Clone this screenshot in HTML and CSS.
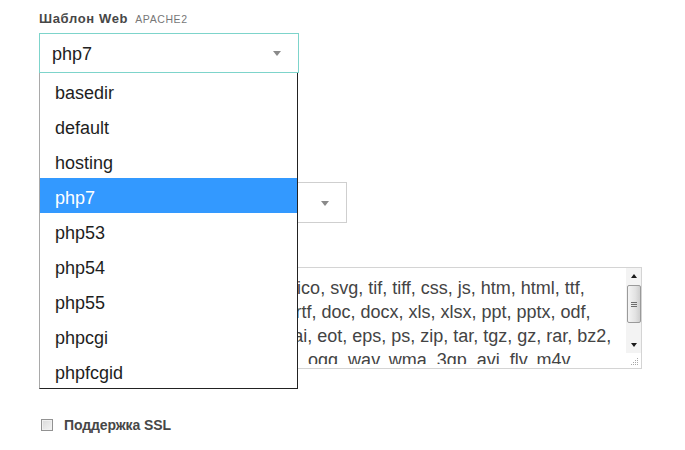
FILE: index.html
```html
<!DOCTYPE html>
<html lang="ru">
<head>
<meta charset="utf-8">
<title>Шаблон Web</title>
<link rel="stylesheet" href="styles.css">
</head>
<body>
<form class="form">
  <div class="label-row">
    <span class="label">Шаблон Web</span>
    <span class="hint">APACHE2</span>
  </div>
  <div class="select-wrap">
    <div class="select select-active">
      <span class="select-value">php7</span>
      <span class="arrow"></span>
    </div>
    <ul class="dropdown">
      <li class="option">basedir</li>
      <li class="option">default</li>
      <li class="option">hosting</li>
      <li class="option option-selected">php7</li>
      <li class="option">php53</li>
      <li class="option">php54</li>
      <li class="option">php55</li>
      <li class="option">phpcgi</li>
      <li class="option">phpfcgid</li>
    </ul>
  </div>

  <div class="select select-second">
    <span class="select-value"></span>
    <span class="arrow"></span>
  </div>

  <div class="textarea">
    <div class="textarea-text">jpg, jpeg, gif, png, bmp, ico, svg, tif, tiff, css, js, htm, html, ttf,<br>otf, webp, woff, txt, csv, rtf, doc, docx, xls, xlsx, ppt, pptx, odf,<br>odp, ods, odt, pdf, psd, ai, eot, eps, ps, zip, tar, tgz, gz, rar, bz2,<br>7z, aac, m4a, mp3, mp4, ogg, wav, wma, 3gp, avi, flv, m4v,</div>
    <div class="scrollbar">
      <div class="sb-btn"><span class="sb-up"></span></div>
      <div class="sb-thumb"><span class="grip"></span><span class="grip"></span><span class="grip"></span></div>
      <div class="sb-track"></div>
      <div class="sb-btn"><span class="sb-down"></span></div>
      <div class="sb-resize">
        <svg width="15" height="15" viewBox="0 0 15 15">
          <g fill="#a8a8a8">
            <rect x="11" y="5" width="1" height="1"/>
            <rect x="9" y="7" width="1" height="1"/><rect x="11" y="7" width="1" height="1"/>
            <rect x="7" y="9" width="1" height="1"/><rect x="9" y="9" width="1" height="1"/><rect x="11" y="9" width="1" height="1"/>
            <rect x="5" y="11" width="1" height="1"/><rect x="7" y="11" width="1" height="1"/><rect x="9" y="11" width="1" height="1"/><rect x="11" y="11" width="1" height="1"/>
          </g>
        </svg>
      </div>
    </div>
  </div>

  <label class="check-row">
    <span class="checkbox"></span>
    <span class="check-label">Поддержка SSL</span>
  </label>
</form>
</body>
</html>
```
FILE: styles.css
```css
* { box-sizing: border-box; }
html, body { margin: 0; padding: 0; background: #fff; }
body {
  font-family: "Liberation Sans", Arial, sans-serif;
  width: 685px;
  height: 450px;
  overflow: hidden;
}
.form {
  padding: 11px 0 0 39px;
  display: flex;
  flex-direction: column;
  align-items: flex-start;
}
.label-row {
  height: 16px;
  line-height: 16px;
  margin-bottom: 6px;
  display: flex;
  align-items: baseline;
}
.label {
  font-weight: bold;
  font-size: 13px;
  color: #474747;
  letter-spacing: 0.65px;
}
.hint {
  font-size: 10.5px;
  color: #777;
  margin-left: 7px;
  letter-spacing: 0.6px;
}
.select-wrap {
  position: relative;
}
.select {
  width: 260px;
  height: 40px;
  border: 1px solid #cfcfcf;
  display: flex;
  align-items: center;
  justify-content: space-between;
  padding: 0 17px 0 12px;
  font-size: 18px;
  color: #222;
  background: #fff;
}
.select-active {
  border-color: #7dd4cb;
}
.select-value {
  line-height: 38px;
  padding-top: 1px;
}
.arrow {
  width: 0;
  height: 0;
  border-left: 4.5px solid transparent;
  border-right: 4.5px solid transparent;
  border-top: 5px solid #8a8a8a;
  margin-top: 1px;
}
.select-second {
  width: 308px;
  height: 41px;
  margin-top: 109px;
}
.dropdown {
  position: absolute;
  top: 40px;
  left: 0;
  width: 259px;
  margin: 0;
  padding: 0;
  list-style: none;
  background: #fff;
  border-left: 1px solid #a9a9a9;
  border-right: 1px solid #222;
  border-bottom: 1px solid #222;
  z-index: 10;
}
.option {
  height: 35px;
  padding: 5px 0 0 15px;
  line-height: 30px;
  font-size: 18px;
  color: #1e1e1e;
}
.option-selected {
  background: #3399ff;
  color: #fff;
}
.textarea {
  margin-top: 44px;
  margin-left: 60px;
  width: 543px;
  height: 102px;
  border: 1px solid #d4d4d4;
  display: flex;
  align-items: flex-start;
  background: #fff;
}
.textarea-text {
  flex: 1;
  height: 96px;
  overflow: hidden;
  padding: 8px 0 0 5px;
  font-size: 18px;
  line-height: 24px;
  color: #444;
  white-space: nowrap;
}
.scrollbar {
  width: 15px;
  height: 100px;
  display: flex;
  flex-direction: column;
  background: #f3f3f3;
}
.sb-btn {
  height: 16px;
  display: flex;
  align-items: center;
  justify-content: center;
}
.sb-up {
  width: 0; height: 0;
  border-left: 3.5px solid transparent;
  border-right: 3.5px solid transparent;
  border-bottom: 4px solid #1a1a1a;
}
.sb-down {
  width: 0; height: 0;
  border-left: 3.5px solid transparent;
  border-right: 3.5px solid transparent;
  border-top: 4px solid #1a1a1a;
}
.sb-thumb {
  height: 38px;
  margin: 1px 0 0 1px;
  width: 14px;
  border: 1px solid #9a9a9a;
  border-radius: 2px;
  background: linear-gradient(to right, #f4f4f4, #e3e3e3 60%, #cfcfcf);
  display: flex;
  flex-direction: column;
  align-items: center;
  justify-content: center;
  gap: 1px;
}
.grip {
  width: 6px;
  height: 1px;
  background: #6e6e6e;
}
.sb-track {
  flex: 1;
}
.sb-resize {
  height: 15px;
  background: #fff;
  display: flex;
}
.check-row {
  margin-top: 49px;
  margin-left: 2px;
  display: flex;
  align-items: center;
  height: 14px;
}
.checkbox {
  width: 12px;
  height: 12px;
  border: 1px solid #929292;
  background: linear-gradient(135deg, #d9d9d9, #f4f4f4);
  box-shadow: inset 0 0 0 1px #f0f0f0;
}
.check-label {
  margin-left: 11px;
  font-weight: bold;
  font-size: 14px;
  color: #474747;
  letter-spacing: -0.1px;
}
```
